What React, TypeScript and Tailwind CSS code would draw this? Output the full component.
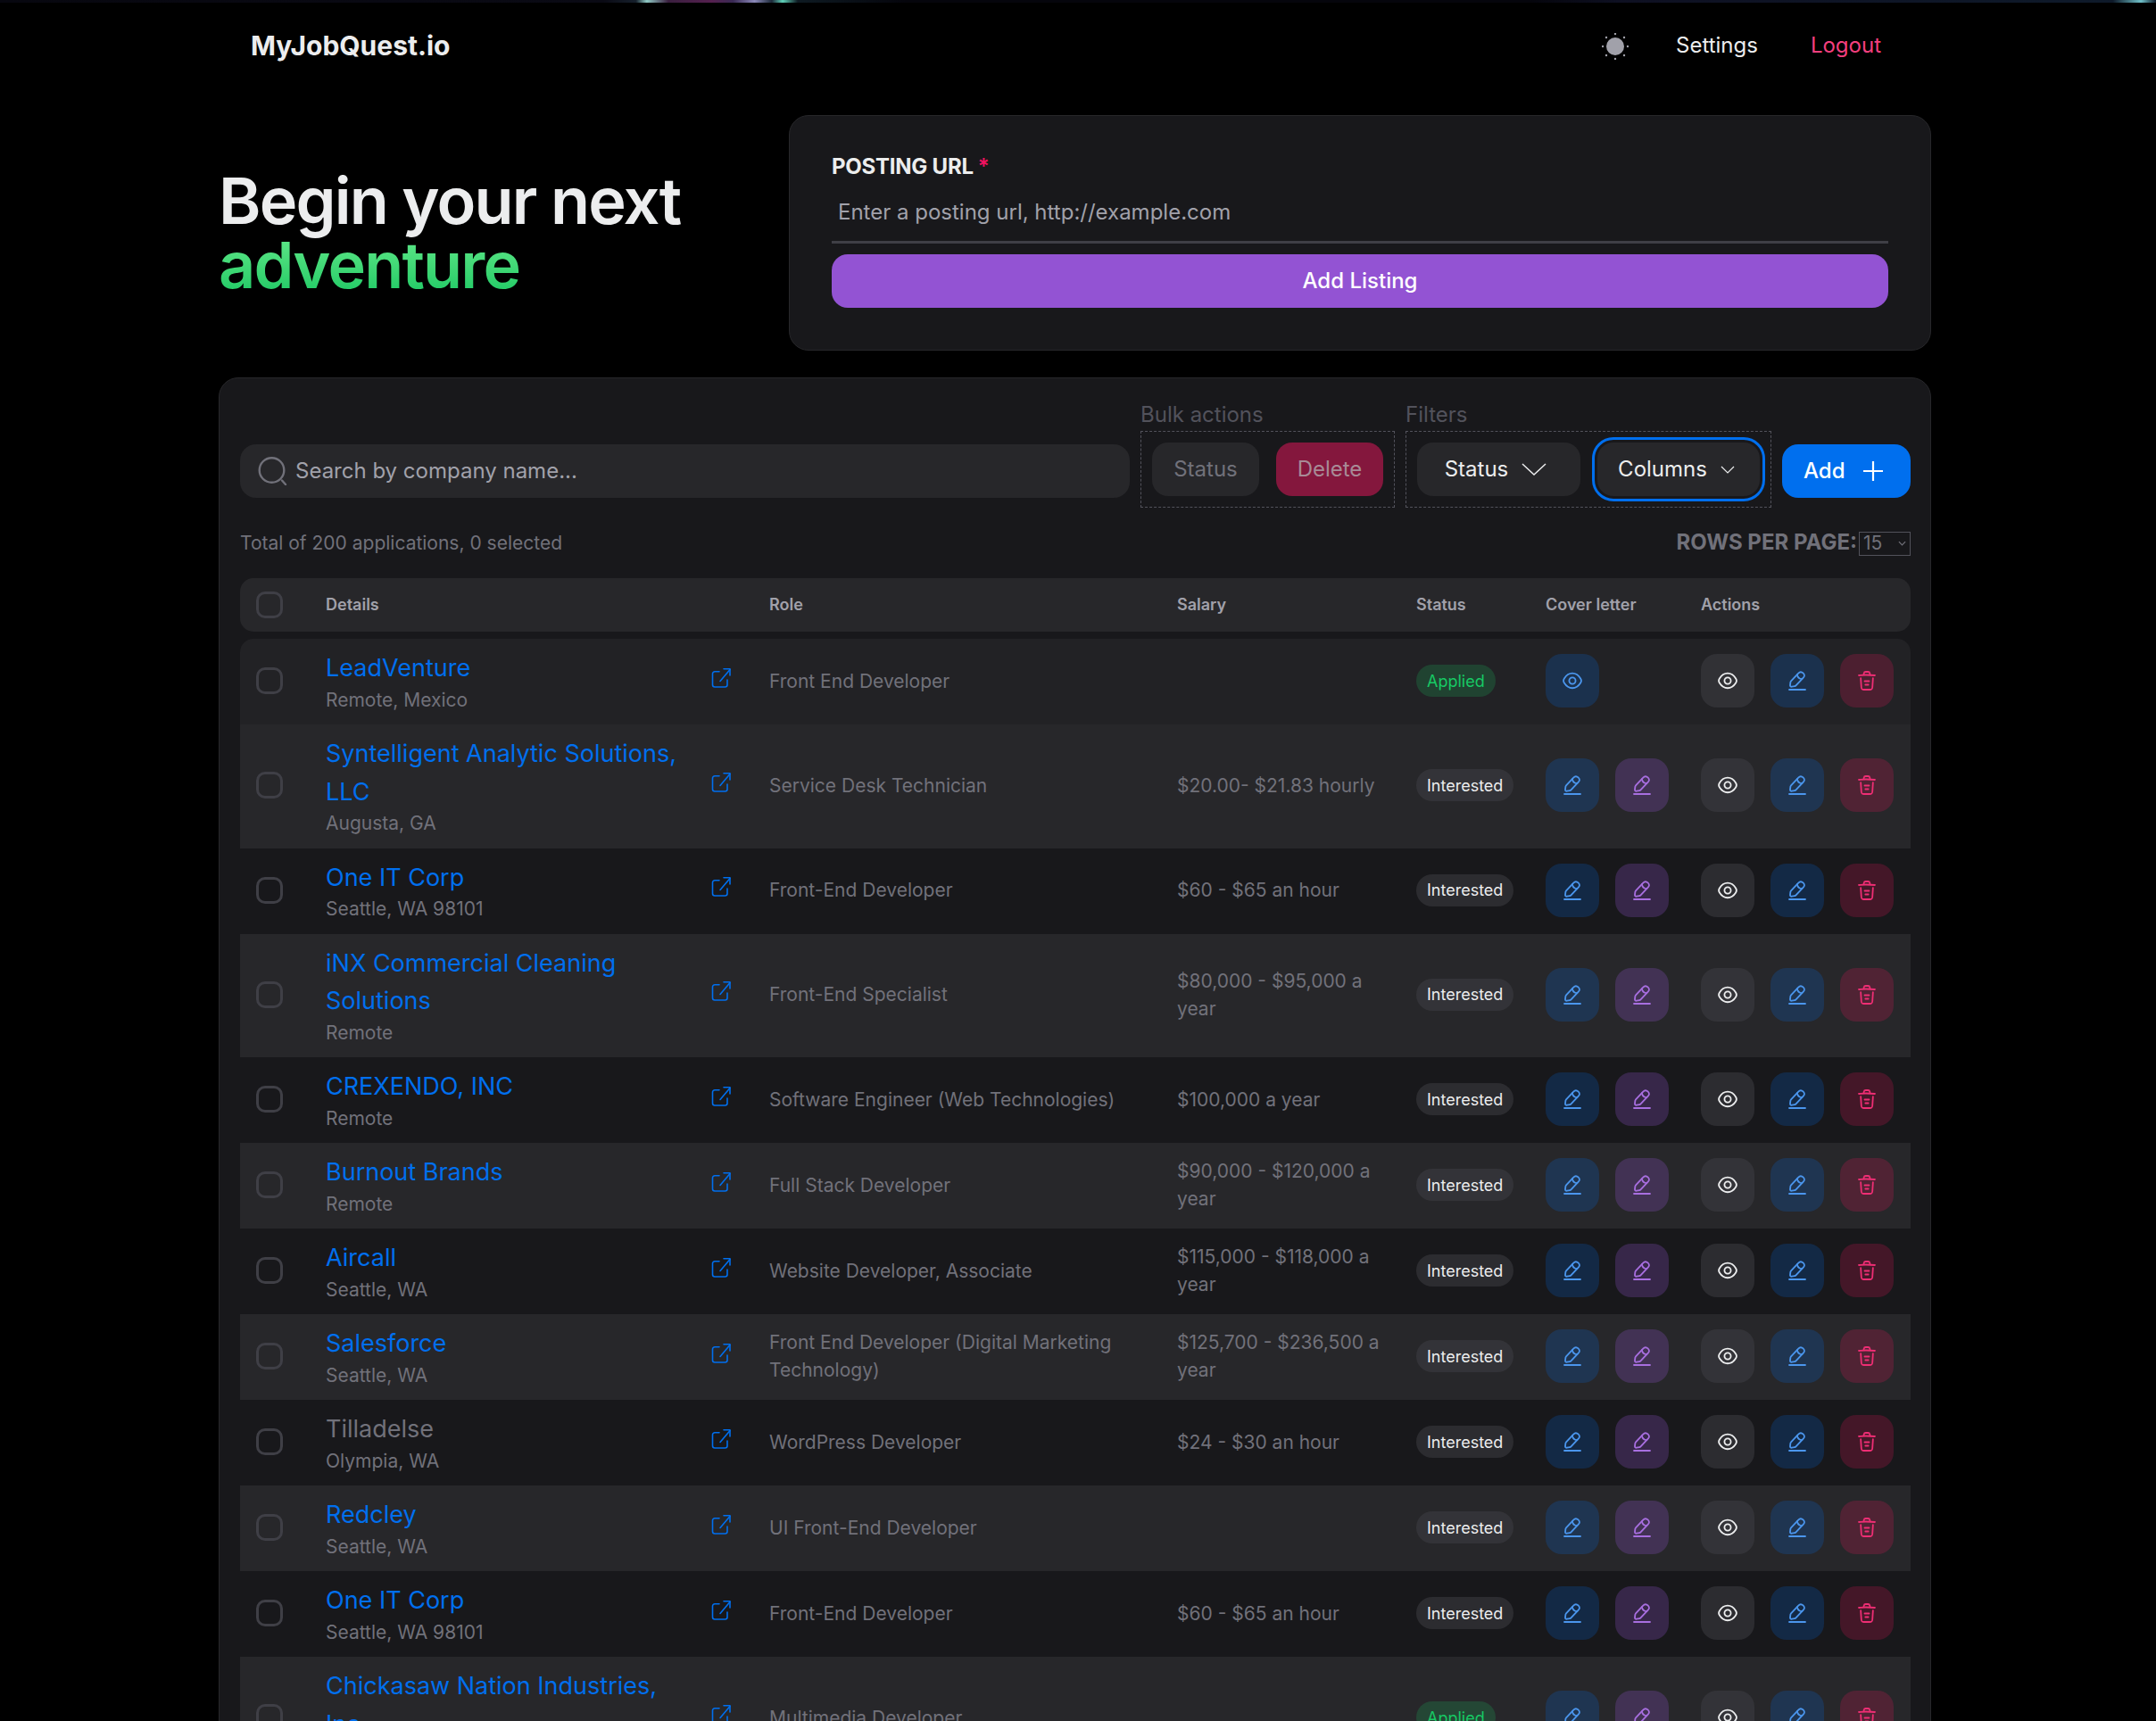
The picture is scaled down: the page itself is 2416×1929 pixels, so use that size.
type Row = {
  name: string;
  location: string;
  role: string;
  salary?: string;
  status: "Applied" | "Interested";
  muted?: boolean;
  coverViewOnly?: boolean;
};

const rows: Row[] = [
  { name: "LeadVenture", location: "Remote, Mexico", role: "Front End Developer", status: "Applied", coverViewOnly: true },
  { name: "Syntelligent Analytic Solutions, LLC", location: "Augusta, GA", role: "Service Desk Technician", salary: "$20.00- $21.83 hourly", status: "Interested" },
  { name: "One IT Corp", location: "Seattle, WA 98101", role: "Front-End Developer", salary: "$60 - $65 an hour", status: "Interested" },
  { name: "iNX Commercial Cleaning Solutions", location: "Remote", role: "Front-End Specialist", salary: "$80,000 - $95,000 a year", status: "Interested" },
  { name: "CREXENDO, INC", location: "Remote", role: "Software Engineer (Web Technologies)", salary: "$100,000 a year", status: "Interested" },
  { name: "Burnout Brands", location: "Remote", role: "Full Stack Developer", salary: "$90,000 - $120,000 a year", status: "Interested" },
  { name: "Aircall", location: "Seattle, WA", role: "Website Developer, Associate", salary: "$115,000 - $118,000 a year", status: "Interested" },
  { name: "Salesforce", location: "Seattle, WA", role: "Front End Developer (Digital Marketing Technology)", salary: "$125,700 - $236,500 a year", status: "Interested" },
  { name: "Tilladelse", location: "Olympia, WA", role: "WordPress Developer", salary: "$24 - $30 an hour", status: "Interested", muted: true },
  { name: "Redcley", location: "Seattle, WA", role: "UI Front-End Developer", status: "Interested" },
  { name: "One IT Corp", location: "Seattle, WA 98101", role: "Front-End Developer", salary: "$60 - $65 an hour", status: "Interested" },
  { name: "Chickasaw Nation Industries, Inc", location: "Remote", role: "Multimedia Developer", status: "Applied" },
];

function EyeIcon() {
  return (
    <svg viewBox="0 0 20 20" fill="none" stroke="currentColor" strokeWidth="1.5" className="w-6 h-6">
      <path d="M12.9833 10C12.9833 11.65 11.65 12.9833 10 12.9833C8.35 12.9833 7.01666 11.65 7.01666 10C7.01666 8.35 8.35 7.01666 10 7.01666C11.65 7.01666 12.9833 8.35 12.9833 10Z" strokeLinecap="round" strokeLinejoin="round" />
      <path d="M9.99999 16.8916C12.9417 16.8916 15.6833 15.1583 17.5917 12.1583C18.3417 10.9833 18.3417 9.00831 17.5917 7.83331C15.6833 4.83331 12.9417 3.09998 9.99999 3.09998C7.05833 3.09998 4.31666 4.83331 2.40833 7.83331C1.65833 9.00831 1.65833 10.9833 2.40833 12.1583C4.31666 15.1583 7.05833 16.8916 9.99999 16.8916Z" strokeLinecap="round" strokeLinejoin="round" />
    </svg>
  );
}

function EditIcon() {
  return (
    <svg viewBox="0 0 20 20" fill="none" stroke="currentColor" strokeWidth="1.5" strokeLinecap="round" strokeLinejoin="round" className="w-6 h-6">
      <path d="M11.05 3.00002L4.20835 10.2417C3.95002 10.5167 3.70002 11.0584 3.65002 11.4334L3.34169 14.1334C3.23335 15.1084 3.93335 15.775 4.90002 15.6084L7.58335 15.15C7.95835 15.0834 8.48335 14.8084 8.74168 14.525L15.5834 7.28335C16.7667 6.03335 17.3 4.60835 15.4583 2.86668C13.625 1.14168 12.2334 1.75002 11.05 3.00002Z" strokeMiterlimit="10" />
      <path d="M9.90833 4.20831C10.2667 6.50831 12.1333 8.26665 14.45 8.49998" strokeMiterlimit="10" />
      <path d="M2.5 18.3333H17.5" strokeMiterlimit="10" />
    </svg>
  );
}

function TrashIcon() {
  return (
    <svg viewBox="0 0 20 20" fill="none" stroke="currentColor" strokeWidth="1.5" strokeLinecap="round" strokeLinejoin="round" className="w-6 h-6">
      <path d="M17.5 4.98332C14.725 4.70832 11.9333 4.56665 9.15 4.56665C7.5 4.56665 5.85 4.64998 4.2 4.81665L2.5 4.98332" />
      <path d="M7.08331 4.14169L7.26665 3.05002C7.39998 2.25835 7.49998 1.66669 8.90831 1.66669H11.0916C12.5 1.66669 12.6083 2.29169 12.7333 3.05835L12.9166 4.14169" />
      <path d="M15.7084 7.61664L15.1667 16.0083C15.075 17.3166 15 18.3333 12.675 18.3333H7.32502C5.00002 18.3333 4.92502 17.3166 4.83335 16.0083L4.29169 7.61664" />
      <path d="M8.60834 13.75H11.3833" />
      <path d="M7.91669 10.4167H12.0834" />
    </svg>
  );
}

function LinkOutIcon() {
  return (
    <svg viewBox="0 0 24 24" fill="none" stroke="currentColor" strokeWidth="1.6" strokeLinecap="round" strokeLinejoin="round" className="block w-6 h-6 shrink-0 text-[#006fee]">
      <path d="M10 4.8H5a2.5 2.5 0 0 0-2.5 2.5V19.5A2.5 2.5 0 0 0 5 22h11.5a2.5 2.5 0 0 0 2.5-2.5V14" />
      <path d="M11 15.5L22 2.5" />
      <path d="M15 1.8h7V9" />
    </svg>
  );
}

function SearchIcon() {
  return (
    <svg viewBox="0 0 33 32" fill="none" stroke="currentColor" strokeWidth="2.4" className="w-[33px] h-8 shrink-0 text-[#71717a]">
      <circle cx="15.5" cy="15" r="13.8" />
      <path d="M27 26.5l4 4.5" strokeLinecap="round" />
    </svg>
  );
}

function SunIcon() {
  return (
    <svg viewBox="0 0 30 30" fill="currentColor" className="w-[30px] h-[30px] mt-[2px] text-[#a1a1aa]">
      <circle cx="15" cy="15" r="10" />
      <circle cx="15" cy="1" r="1.2" />
      <circle cx="15" cy="29" r="1.2" />
      <circle cx="1" cy="15" r="1.2" />
      <circle cx="29" cy="15" r="1.2" />
      <circle cx="5" cy="5" r="1.2" />
      <circle cx="25" cy="5" r="1.2" />
      <circle cx="5" cy="25" r="1.2" />
      <circle cx="25" cy="25" r="1.2" />
    </svg>
  );
}

function Chevron({ big }: { big?: boolean }) {
  return big ? (
    <svg viewBox="0 0 28 14" fill="none" stroke="currentColor" strokeWidth="1.5" className="w-7 h-[14px]">
      <path d="M1 1l13 12L27 1" />
    </svg>
  ) : (
    <svg viewBox="0 0 16 9" fill="none" stroke="currentColor" strokeWidth="1.2" className="w-4 h-[9px]">
      <path d="M1 1l7 7 7-7" />
    </svg>
  );
}

function Checkbox() {
  return <span className="block w-[30px] h-[30px] rounded-[10px] border-[3px] border-[#3f3f46]" />;
}

function IconButton({ tone, children }: { tone: "blue" | "purple" | "gray" | "red"; children: React.ReactNode }) {
  const tones = {
    blue: "bg-[#006fee]/20 text-[#4b96ed]",
    purple: "bg-[#9353d3]/25 text-[#a86fe0]",
    gray: "bg-[#3f3f46]/50 text-[#ecedee]",
    red: "bg-[#f31260]/20 text-[#ee2e74]",
  };
  return (
    <button className={`flex items-center justify-center w-[60px] h-[60px] rounded-[18px] ${tones[tone]}`}>
      {children}
    </button>
  );
}

function TableRow({ row, index }: { row: Row; index: number }) {
  const striped = index % 2 === 1;
  const plain = index === 0 ? "bg-[#222225]" : "bg-[#18181b]";
  return (
    <tr className={striped ? "bg-[#27272a]" : plain}>
      <td className={`pl-[18px] pb-[2px] ${index === 0 ? "rounded-tl-[15px]" : ""}`}>
        <Checkbox />
      </td>
      <td className="pl-[19px] pr-[24px] pt-3 pb-[13px]">
        <div className="flex items-center justify-between">
          <div className="w-[398px]">
            <div className={`text-[27px] leading-[42.5px] ${row.muted ? "text-[#71717a]" : "text-[#006fee]"}`}>{row.name}</div>
            <div className="text-[21px] leading-[28.5px] text-[#71717a]">{row.location}</div>
          </div>
          <span className="-mt-[8px]">
            <LinkOutIcon />
          </span>
        </div>
      </td>
      <td className="px-[18px] pb-[2px] text-[21px] leading-[31px] text-[#71717a]">{row.role}</td>
      <td className="px-[18px] pb-[2px] text-[21px] leading-[31px] text-[#71717a]">{row.salary}</td>
      <td className="px-[18px] pb-[2px]">
        <span
          className={`inline-flex items-center h-9 px-3 rounded-full text-[18px] ${
            row.status === "Applied" ? "bg-[#17c964]/20 text-[#17c964]" : "bg-[#3f3f46]/50 text-[#ecedee]"
          }`}
        >
          {row.status}
        </span>
      </td>
      <td className="px-[18px] pb-[2px]">
        <div className="flex gap-[18px]">
          <IconButton tone="blue">{row.coverViewOnly ? <EyeIcon /> : <EditIcon />}</IconButton>
          {!row.coverViewOnly && (
            <IconButton tone="purple">
              <EditIcon />
            </IconButton>
          )}
        </div>
      </td>
      <td className={`px-[18px] pb-[2px] ${index === 0 ? "rounded-tr-[15px]" : ""}`}>
        <div className="flex gap-[18px]">
          <IconButton tone="gray">
            <EyeIcon />
          </IconButton>
          <IconButton tone="blue">
            <EditIcon />
          </IconButton>
          <IconButton tone="red">
            <TrashIcon />
          </IconButton>
        </div>
      </td>
    </tr>
  );
}

export default function App() {
  return (
    <div className="h-screen overflow-hidden bg-black font-['Inter',sans-serif] text-[#ecedee]">
      <div className="h-[3px] bg-[linear-gradient(90deg,#07070f_0%,#0a0a14_28%,#16202c_29.5%,#8fc9c4_30%,#3a1f3f_31%,#55204f_33%,#3a2a55_34%,#8a88b8_35%,#1d2a3a_35.8%,#5fd0b8_36.3%,#0e1a22_37%,#05050c_42%,#05050c_71%,#0e1022_75%,#0e1a2a_98%,#6fc0c8_99.3%,#0e1a2a_100%)]" />

      <div className="ml-[245px] w-[1919px]">
        <nav className="flex items-center justify-between h-[96px] pl-9 pr-[56px]">
          <span className="text-[30px] font-bold">MyJobQuest.io</span>
          <div className="flex items-center text-[24px]">
            <SunIcon />
            <a className="ml-[53px]">Settings</a>
            <a className="ml-[59px] text-[#f43f7e]">Logout</a>
          </div>
        </nav>

        <section className="flex mt-[30px]">
          <div className="w-[639px] pt-[60px]">
            <h1 className="text-[72px] leading-[72px] font-semibold tracking-tight">Begin your next</h1>
            <h1 className="text-[72px] leading-[72px] font-semibold tracking-tight text-transparent bg-clip-text bg-gradient-to-b from-[#5fe98a] to-[#17c964] w-fit">
              adventure
            </h1>
          </div>
          <div className="flex-1 h-[264px] rounded-[22px] bg-[#18181b] border border-[#27272a] px-[47px] pt-[39px]">
            <label className="block text-[24px] leading-9 font-bold text-[#ecedee] -tracking-[0.01em]">
              POSTING URL
              <span className="ml-[5px] font-semibold text-[#f31260]">*</span>
            </label>
            <div className="flex items-center h-[68px] pl-[7px] border-b-[3px] border-[#3f3f46] text-[24px] text-[#a1a1aa]">
              Enter a posting url, http://example.com
            </div>
            <button className="mt-3 w-full h-[60px] rounded-[18px] bg-[#9353d3] text-[24px] font-medium text-white">Add Listing</button>
          </div>
        </section>

        <section className="mt-[30px] rounded-[22px] bg-[#18181b] border border-[#27272a] pl-[23px] pr-[22px] pt-[23px]">
          <div className="flex items-end">
            <div className="flex-1 flex items-center gap-[9px] h-[60px] mb-[11px] pl-5 rounded-[18px] bg-[#27272a] text-[24px] text-[#a1a1aa]">
              <SearchIcon />
              Search by company name...
            </div>
            <div className="ml-3">
              <div className="text-[24px] leading-9 text-[#52525b]">Bulk actions</div>
              <div className="flex gap-[19px] p-3 border border-dashed border-[#52525b]">
                <button className="w-[120px] h-[60px] rounded-[18px] bg-[#27272a] text-[24px] text-[#71717a]">Status</button>
                <button className="w-[120px] h-[60px] rounded-[18px] bg-[#84173d] text-[24px] text-[#a88a96]">Delete</button>
              </div>
            </div>
            <div className="ml-3">
              <div className="text-[24px] leading-9 text-[#52525b]">Filters</div>
              <div className="flex gap-[19px] p-3 border border-dashed border-[#52525b]">
                <button className="flex items-center justify-center gap-[15px] w-[183px] h-[60px] pr-[7px] rounded-[18px] bg-[#27272a] text-[24px]">
                  Status
                  <Chevron big />
                </button>
                <button className="flex items-center justify-center gap-[15px] w-[182px] h-[60px] pr-[5px] rounded-[18px] bg-[#27272a] text-[24px] outline-[3px] outline-[#006fee] outline-offset-[3px]">
                  Columns
                  <Chevron />
                </button>
              </div>
            </div>
            <button className="flex items-center gap-5 ml-3 mb-[11px] pl-6 w-[144px] h-[60px] rounded-[18px] bg-[#006fee] text-[24px] font-medium text-white">
              Add
              <svg viewBox="0 0 22 22" fill="none" stroke="currentColor" strokeWidth="2.2" className="w-[22px] h-[22px]">
                <path d="M11 0v22M0 11h22" />
              </svg>
            </button>
          </div>

          <div className="flex items-center justify-between mt-[21px] h-[36px]">
            <span className="pt-[2px] text-[21px] text-[#71717a]">Total of 200 applications, 0 selected</span>
            <div className="flex items-center">
              <span className="text-[24px] font-bold text-[#71717a]">ROWS PER PAGE:</span>
              <span className="flex items-center justify-between w-[58px] h-[27px] mt-[2px] ml-[2px] px-[4px] border border-[#52525b] text-[21px] text-[#71717a]">
                15
                <svg viewBox="0 0 10 6" fill="none" stroke="currentColor" strokeWidth="1.3" className="w-[9px] h-[6px]">
                  <path d="M1 1l4 4 4-4" />
                </svg>
              </span>
            </div>
          </div>

          <table className="table-fixed w-full mt-[22px] border-separate border-spacing-0">
            <colgroup>
              <col className="w-[77px]" />
              <col className="w-[498px]" />
              <col className="w-[457px]" />
              <col className="w-[268px]" />
              <col className="w-[145px]" />
              <col className="w-[174px]" />
              <col />
            </colgroup>
            <thead>
              <tr className="h-[60px] bg-[#27272a] text-left text-[18px] font-semibold text-[#a1a1aa]">
                <th className="pl-[18px] rounded-l-[15px]">
                  <Checkbox />
                </th>
                <th className="pl-[19px] pr-[18px] pb-[2px] font-semibold">Details</th>
                <th className="px-[18px] pb-[2px] font-semibold">Role</th>
                <th className="px-[18px] pb-[2px] font-semibold">Salary</th>
                <th className="px-[18px] pb-[2px] font-semibold">Status</th>
                <th className="px-[18px] pb-[2px] font-semibold">Cover letter</th>
                <th className="px-[18px] pb-[2px] font-semibold rounded-r-[15px]">Actions</th>
              </tr>
              <tr className="h-2" />
            </thead>
            <tbody>
              {rows.map((row, i) => (
                <TableRow key={i} row={row} index={i} />
              ))}
            </tbody>
          </table>
        </section>
      </div>
    </div>
  );
}
